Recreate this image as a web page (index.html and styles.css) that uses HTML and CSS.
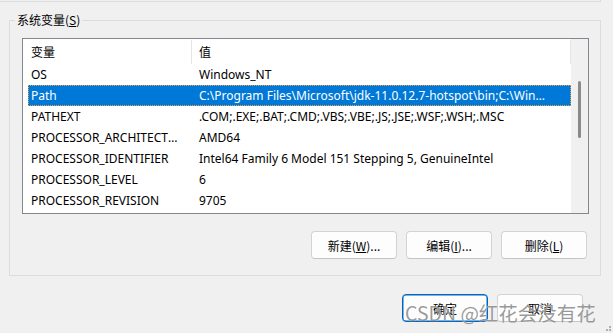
FILE: index.html
```html
<!DOCTYPE html>
<html lang="zh-CN">
<head>
<meta charset="utf-8">
<title>环境变量</title>
<link rel="stylesheet" href="styles.css">
</head>
<body>
<div class="window">
  <div class="prev-group"></div>
  <div class="group">
    <div class="legend">系统变量(<u>S</u>)</div>
    <div class="listbox">
      <div class="list">
        <div class="row head">
          <div class="c1">变量</div>
          <div class="c2">值</div>
        </div>
        <div class="row"><div class="c1">OS</div><div class="c2">Windows_NT</div></div>
        <div class="row sel"><div class="c1">Path</div><div class="c2">C:\Program Files\Microsoft\jdk-11.0.12.7-hotspot\bin;C:\Windows\system32;C:\Windows</div></div>
        <div class="row"><div class="c1">PATHEXT</div><div class="c2">.COM;.EXE;.BAT;.CMD;.VBS;.VBE;.JS;.JSE;.WSF;.WSH;.MSC</div></div>
        <div class="row"><div class="c1">PROCESSOR_ARCHITECTURE</div><div class="c2">AMD64</div></div>
        <div class="row"><div class="c1">PROCESSOR_IDENTIFIER</div><div class="c2">Intel64 Family 6 Model 151 Stepping 5, GenuineIntel</div></div>
        <div class="row"><div class="c1">PROCESSOR_LEVEL</div><div class="c2">6</div></div>
        <div class="row"><div class="c1">PROCESSOR_REVISION</div><div class="c2">9705</div></div>
      </div>
      <div class="scrollbar"><div class="thumb"></div></div>
    </div>
    <div class="actions">
      <button class="btn">新建(<u>W</u>)...</button>
      <button class="btn">编辑(<u>I</u>)...</button>
      <button class="btn">删除(<u>L</u>)</button>
    </div>
  </div>
  <div class="footer">
    <button class="btn default">确定</button>
    <button class="btn">取消</button>
  </div>
  <div class="watermark">CSDN @红花会没有花</div>
  <div class="grip"><i></i><i></i><i></i></div>
</div>
</body>
</html>
```

FILE: styles.css
```css
html, body {
  margin: 0;
  padding: 0;
}
body {
  background: #f0f0f0;
  font-family: "Noto Sans", "Noto Sans CJK SC", sans-serif;
  font-size: 12px;
  color: #000;
}
.window {
  position: relative;
  width: 613px;
  height: 333px;
  overflow: hidden;
}
.prev-group {
  width: 600px;
  height: 1px;
  border-bottom: 1px solid #dcdcdc;
  border-right: 1px solid #dcdcdc;
}
.group {
  margin: 18px 0 0 9px;
  width: 590px;
  height: 254px;
  border: 1px solid #dcdcdc;
  box-sizing: content-box;
  display: flex;
  flex-direction: column;
}
.legend {
  align-self: flex-start;
  margin: -9px 0 0 5px;
  padding: 0 2px;
  height: 16px;
  line-height: 16px;
  background: #f0f0f0;
  font-family: "Noto Sans CJK SC", sans-serif;
}
.listbox {
  margin: 10px 0 0 12px;
  width: 565px;
  height: 174px;
  border: 1px solid #828790;
  background: #fff;
  display: flex;
}
.list {
  flex: 1;
  padding-left: 5px;
  min-width: 0;
}
.row {
  display: flex;
  height: 21px;
  line-height: 21px;
  white-space: nowrap;
}
.row.head {
  height: 25px;
  line-height: 24px;
  font-family: "Noto Sans CJK SC", sans-serif;
}
.head .c1,
.head .c2 {
  border-right: 1px solid #e5e5e5;
  margin: 1px 0 0;
  line-height: 23px;
}
.c1 {
  flex: none;
  box-sizing: border-box;
  width: 164px;
  padding-left: 3px;
  padding-right: 6px;
  overflow: hidden;
  text-overflow: ellipsis;
}
.c2 {
  flex: 1;
  padding-left: 7px;
  padding-right: 20px;
  overflow: hidden;
  text-overflow: ellipsis;
}
.row.sel {
  background: #0078d7;
  color: #fff;
  outline: 1px dotted #f0a040;
  outline-offset: -1px;
}
.scrollbar {
  width: 17px;
  flex: none;
  background: #f0f0f0;
  position: relative;
}
.thumb {
  position: absolute;
  left: 7px;
  top: 42px;
  width: 3px;
  height: 57px;
  border-radius: 2px;
  background: #8a8a8a;
}
.actions {
  display: flex;
  justify-content: flex-end;
  gap: 9px;
  margin: 17px 13px 0 0;
}
.btn {
  width: 86px;
  height: 28px;
  border: 1px solid #d3d3d3;
  border-bottom-color: #c4c4c4;
  border-radius: 4px;
  background: #fdfdfd;
  font-family: "Noto Sans CJK SC", sans-serif;
  font-size: 12px;
  color: #000;
  padding: 0;
}
.footer {
  display: flex;
  justify-content: flex-end;
  gap: 9px;
  margin: 18px 30px 0 0;
}
.btn.default {
  border: 1px solid #0067c0;
  box-shadow: inset 0 0 0 0.5px #0067c0;
}
.watermark {
  position: absolute;
  left: 405px;
  top: 300px;
  font-family: "Noto Sans CJK SC", sans-serif;
  font-size: 19.5px;
  line-height: 26px;
  color: rgba(125, 125, 125, 0.78);
  text-shadow: 0 0 1px rgba(255, 255, 255, 0.9);
  white-space: nowrap;
}
.grip {
  position: absolute;
  right: 2px;
  bottom: 2px;
  width: 7px;
  height: 7px;
}
.grip i {
  position: absolute;
  width: 2px;
  height: 2px;
  background: #b0b0b0;
}
.grip i:nth-child(1) { right: 0; bottom: 0; }
.grip i:nth-child(2) { right: 3px; bottom: 0; }
.grip i:nth-child(3) { right: 0; bottom: 3px; }
```
